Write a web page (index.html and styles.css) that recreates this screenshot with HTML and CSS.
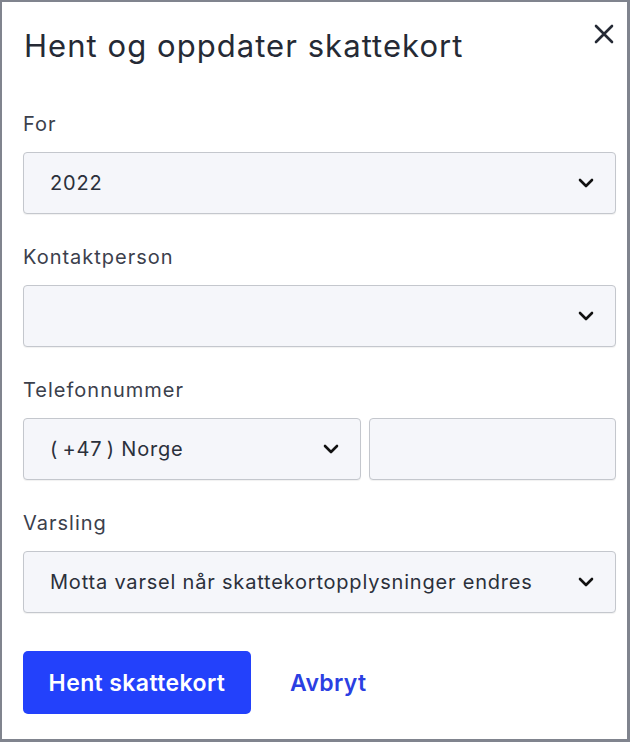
FILE: index.html
```html
<!DOCTYPE html>
<html lang="no">
<head>
<meta charset="utf-8">
<link rel="stylesheet" href="styles.css">
</head>
<body>
<div class="dialog">
  <div class="header">
    <h1 class="title">Hent og oppdater skattekort</h1>
    <button class="close" aria-label="Lukk">
      <svg width="22" height="22" viewBox="0 0 22 22"><path d="M3 3L19 19M19 3L3 19" stroke="#252a35" stroke-width="2.6" stroke-linecap="round" fill="none"/></svg>
    </button>
  </div>
  <div class="field first">
    <div class="label">For</div>
    <div class="select"><span>2022</span><svg class="chev" width="16" height="10" viewBox="0 0 16 10"><path d="M2 2l6 6 6-6" stroke="#111" stroke-width="2.6" fill="none" stroke-linecap="round" stroke-linejoin="round"/></svg></div>
  </div>
  <div class="field">
    <div class="label">Kontaktperson</div>
    <div class="select"><span></span><svg class="chev" width="16" height="10" viewBox="0 0 16 10"><path d="M2 2l6 6 6-6" stroke="#111" stroke-width="2.6" fill="none" stroke-linecap="round" stroke-linejoin="round"/></svg></div>
  </div>
  <div class="field">
    <div class="label">Telefonnummer</div>
    <div class="phone-row">
      <div class="select country"><span>(&#8201;+47&#8201;) Norge</span><svg class="chev" width="16" height="10" viewBox="0 0 16 10"><path d="M2 2l6 6 6-6" stroke="#111" stroke-width="2.6" fill="none" stroke-linecap="round" stroke-linejoin="round"/></svg></div>
      <div class="select number"></div>
    </div>
  </div>
  <div class="field">
    <div class="label">Varsling</div>
    <div class="select"><span>Motta varsel når skattekortopplysninger endres</span><svg class="chev" width="16" height="10" viewBox="0 0 16 10"><path d="M2 2l6 6 6-6" stroke="#111" stroke-width="2.6" fill="none" stroke-linecap="round" stroke-linejoin="round"/></svg></div>
  </div>
  <div class="actions">
    <button class="primary">Hent skattekort</button>
    <button class="link">Avbryt</button>
  </div>
</div>
</body>
</html>
```
FILE: styles.css
```css
html, body {
  margin: 0;
  padding: 0;
  background: #fff;
}
body {
  font-family: Inter, "Noto Sans", sans-serif;
}
.dialog {
  box-sizing: border-box;
  width: 630px;
  height: 742px;
  border-style: solid;
  border-color: #80848e;
  border-width: 2px 3px 3px 2px;
  padding: 0 11px 0 21px;
  background: #fff;
}
.header {
  display: flex;
  justify-content: space-between;
  align-items: flex-start;
  height: 110px;
}
.title {
  margin: 24px 0 0 1px;
  font-size: 31px;
  line-height: 40px;
  font-weight: 400;
  color: #252a35;
  letter-spacing: 1.05px;
}
.close {
  margin: 21px 1px 0 0;
  padding: 0;
  border: 0;
  background: none;
  width: 22px;
  height: 22px;
}
.close svg { display: block; }
.field { margin-top: 31px; }
.field.first { margin-top: 0; }
.label {
  font-size: 20px;
  line-height: 24px;
  color: #3b404c;
  margin-bottom: 16px;
  letter-spacing: 1px;
}
.select {
  box-sizing: border-box;
  height: 62px;
  border: 1px solid #c4c7cd;
  border-radius: 4px;
  background: #f5f6fa;
  display: flex;
  align-items: center;
  justify-content: space-between;
  padding: 0 21px 0 26px;
  font-size: 20px;
  letter-spacing: 0.8px;
  color: #2b303b;
  box-shadow: 0 1px 1px rgba(0,0,0,0.06);
}
.chev { display: block; }
.phone-row {
  display: grid;
  grid-template-columns: 338px 1fr;
  gap: 8px;
}
.actions {
  margin-top: 38px;
  display: flex;
  align-items: center;
  gap: 39px;
}
.primary {
  box-sizing: border-box;
  width: 228px;
  height: 63px;
  border: 0;
  border-radius: 5px;
  background: #2341fb;
  color: #fff;
  font-family: Inter, "Noto Sans", sans-serif;
  font-size: 23px;
  letter-spacing: 0.4px;
  font-weight: 600;
}
.link {
  border: 0;
  background: none;
  padding: 0;
  color: #2b3fe2;
  font-family: Inter, "Noto Sans", sans-serif;
  font-size: 23px;
  letter-spacing: 0.3px;
  font-weight: 600;
}
```
